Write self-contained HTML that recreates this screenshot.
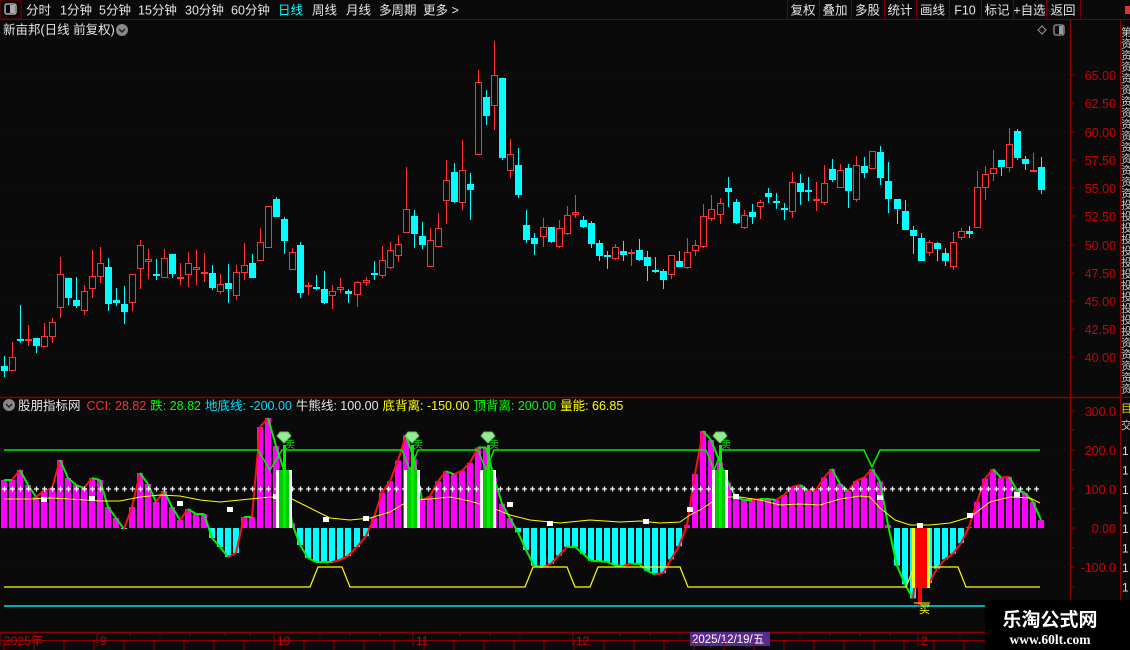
<!DOCTYPE html>
<html><head><meta charset="utf-8">
<style>
html,body{margin:0;padding:0;background:#0a0a0a;width:1130px;height:650px;overflow:hidden}
body{position:relative;font-family:"Liberation Sans","Noto Sans CJK SC",sans-serif;color:#ddd}
svg{position:absolute;left:0;top:0}
</style></head><body>
<svg id="s" width="1130" height="650" xmlns="http://www.w3.org/2000/svg" font-family="Liberation Sans, Noto Sans CJK SC, sans-serif"></svg>
<script>
var o=[];
function P(s){o.push(s);}
P('<rect x="0" y="0" width="1130" height="20" fill="#0a0a0a"/>');
P('<line x1="0" y1="19.5" x2="1130" y2="19.5" stroke="#7a0000"/>');
P('<rect x="0" y="0" width="21" height="19" fill="none" stroke="#7a0000"/>');
P('<rect x="5" y="4" width="11" height="10" rx="2" fill="none" stroke="#aaa" stroke-width="1.5"/><rect x="10" y="5" width="5" height="8" fill="#aaa"/>');
var tb=[["分时",26],["1分钟",60],["5分钟",99],["15分钟",138],["30分钟",185],["60分钟",231],["日线",278],["周线",312],["月线",346],["多周期",379],["更多 >",423]];
tb.forEach(function(t){P('<text x="'+t[1]+'" y="14.5" font-size="12.5" fill="'+(t[0]=="日线"?"#00ffff":"#e6e6e6")+'">'+t[0]+'</text>');});
var rb=[["复权",787],["叠加",819],["多股",851],["统计",884],["画线",916],["F10",949],["标记",981],["+自选",1013],["返回",1046]];
var sep=[787,819,851,884,916,949,981,1013,1046,1080];
sep.forEach(function(x){P('<line x1="'+(x+0.5)+'" y1="0" x2="'+(x+0.5)+'" y2="19" stroke="#7a0000"/>');});
rb.forEach(function(t,i){var w=sep[i+1]-sep[i];P('<text x="'+(t[1]+w/2)+'" y="14.5" font-size="12.5" fill="#e6e6e6" text-anchor="middle">'+t[0]+'</text>');});
P('<rect x="1120" y="0" width="10" height="19" fill="#0a0a0a"/><rect x="1125" y="6" width="5" height="8" fill="#e03030"/>');
P('<text x="3" y="34" font-size="12.5" fill="#e6e6e6">新亩邦(日线 前复权)</text>');
P('<circle cx="122" cy="30" r="6" fill="#888"/><path d="M119 29 L122 32 L125 29" stroke="#222" stroke-width="1.5" fill="none"/>');
P('<path d="M1042 26 L1046 30 L1042 34 L1038 30Z" fill="none" stroke="#999"/>');
P('<rect x="1054" y="25" width="10" height="10" rx="2" fill="none" stroke="#999" stroke-width="1.3"/><rect x="1059" y="26" width="4" height="8" fill="#999"/>');
P('<line x1="1070.5" y1="20" x2="1070.5" y2="632" stroke="#8b0000" stroke-width="1.5"/>');
P('<line x1="1120.5" y1="20" x2="1120.5" y2="650" stroke="#8b0000"/>');
P('<line x1="0" y1="397.5" x2="1130" y2="397.5" stroke="#8b0000" stroke-width="1.5"/>');
P('<line x1="0" y1="632.5" x2="1070" y2="632.5" stroke="#8b0000" stroke-width="1.5"/>');
P('<line x1="0" y1="640.5" x2="1130" y2="640.5" stroke="#8b0000"/>');
[[65,75],[62.5,103],[60,132],[57.5,160],[55,188],[52.5,216],[50,245],[47.5,273],[45,301],[42.5,329],[40,357]].forEach(function(p,i){
 if(i%2==0)P('<line x1="0" y1="'+p[1]+'" x2="1070" y2="'+p[1]+'" stroke="#5a0a0a" stroke-dasharray="1 7"/>');
 P('<line x1="1070" y1="'+p[1]+'" x2="1075" y2="'+p[1]+'" stroke="#8b0000"/>');
 P('<text x="1116" y="'+(p[1]+5)+'" font-size="12.5" fill="#d00000" text-anchor="end">'+p[0].toFixed(2)+'</text>');
});
var rs="第资资资资资资资资资资资资资资投投投投投投投投投投投投资资资资资资资资资资资资资资资";
for(var i=0;i<32;i++){P('<text x="1121" y="'+(36+i*11.5)+'" font-size="11" fill="#ccc">'+rs[i]+'</text>');}
P('<rect x="1121" y="398" width="9" height="22" fill="#0a0a0a"/><text x="1121" y="412" font-size="11" fill="#dd0">目</text><text x="1121" y="429" font-size="11" fill="#ccc">交</text>');
for(var i=0;i<10;i++)P('<text x="1122" y="'+(455+i*19.5)+'" font-size="12" fill="#ddd">1</text>');
var C=[[4,366,371,356,377,0],[12,357,371,342,371,1],[20,339,339,305,343,0],[28,339,339,325,346,1],[36,338,346,338,353,0],[44,336,347,323,347,1],[52,322,337,318,343,1],[60,274,308,257,318,1],[68,278,298,278,305,0],[76,300,306,277,308,0],[84,291,311,285,315,1],[92,276,289,250,298,1],[100,263,277,247,283,1],[108,267,304,258,311,0],[116,300,303,288,306,0],[124,304,312,286,324,0],[132,274,303,274,311,1],[140,245,269,240,289,1],[148,259,262,249,279,1],[156,274,274,259,280,0],[164,258,278,249,278,1],[172,254,274,254,278,0],[180,277,277,263,285,1],[188,263,275,252,287,1],[196,267,270,250,285,1],[204,272,272,253,282,1],[212,273,288,265,290,0],[220,284,292,274,294,1],[228,283,289,264,303,0],[236,272,296,265,300,1],[244,265,273,243,280,1],[252,263,278,254,278,0],[260,242,261,228,261,1],[268,206,248,206,248,1],[276,199,217,197,217,0],[284,219,241,217,254,0],[292,252,270,248,270,1],[300,245,293,242,298,0],[308,285,287,282,295,1],[316,287,289,275,290,0],[324,289,303,271,304,0],[332,291,296,285,309,1],[340,287,290,278,293,1],[348,291,294,289,303,0],[357,282,295,281,307,1],[366,280,283,277,286,1],[374,273,273,261,280,0],[382,260,276,246,278,1],[390,250,268,242,269,1],[398,244,256,235,262,1],[406,209,233,167,233,1],[414,216,234,210,248,0],[422,236,245,222,249,0],[430,240,267,228,267,1],[438,228,247,213,247,1],[446,180,201,160,224,1],[454,172,202,163,203,0],[462,170,203,140,210,1],[470,184,190,173,220,0],[478,82,155,70,155,1],[486,97,116,90,125,0],[494,75,106,41,130,1],[502,78,158,78,160,0],[510,154,171,139,178,1],[518,165,195,148,198,0],[526,225,240,210,243,0],[534,238,244,233,255,0],[543,227,237,218,247,1],[551,227,242,227,243,0],[559,228,247,220,248,1],[567,215,234,206,235,1],[575,212,215,195,218,1],[583,220,227,216,228,0],[591,223,244,221,248,0],[599,243,256,240,261,0],[607,255,255,251,269,0],[615,247,259,244,260,1],[623,251,255,241,261,0],[631,252,254,249,266,1],[639,250,260,239,261,0],[647,257,266,251,281,0],[655,270,270,257,273,0],[663,271,280,269,289,0],[671,255,275,255,279,1],[679,261,267,251,267,0],[687,252,268,238,269,1],[695,245,251,240,256,1],[703,216,247,204,248,1],[711,209,219,195,221,1],[720,203,215,198,224,1],[728,188,192,177,207,0],[736,202,223,199,224,0],[744,215,228,210,229,1],[752,212,217,204,224,0],[760,202,207,200,219,1],[768,193,197,188,203,0],[776,201,203,193,209,0],[784,208,210,203,220,0],[792,182,212,172,218,1],[800,183,192,174,205,0],[808,190,190,177,201,0],[816,199,199,182,211,1],[824,183,203,165,205,1],[832,169,180,159,182,0],[840,170,188,164,188,1],[848,168,191,164,208,0],[856,165,200,156,202,1],[864,166,173,157,178,0],[872,151,169,151,169,1],[880,152,178,146,185,0],[888,181,199,162,213,0],[897,199,209,199,224,0],[905,211,230,200,230,0],[913,230,236,226,254,0],[921,238,261,233,261,0],[929,242,253,240,256,1],[937,243,249,242,261,0],[945,253,261,248,266,0],[953,242,267,232,270,1],[961,231,238,228,240,1],[969,231,234,226,238,0],[977,187,228,171,228,1],[985,174,188,166,200,1],[993,168,174,150,181,1],[1001,160,167,160,176,0],[1009,144,168,128,172,1],[1017,131,158,129,160,0],[1025,159,164,156,170,0],[1033,170,170,153,170,1],[1041,167,190,157,194,0]];
C.forEach(function(c){
 var col=c[5]?"#ff3333":"#00ffff";var h=Math.max(c[2]-c[1],1);
 P('<line x1="'+(c[0]+0.5)+'" y1="'+c[3]+'" x2="'+(c[0]+0.5)+'" y2="'+c[4]+'" stroke="'+col+'"/>');
 if(c[5]) P('<rect x="'+(c[0]-2.5)+'" y="'+(c[1]+0.5)+'" width="6" height="'+(h>1?h-1:1)+'" fill="#0a0a0a" stroke="'+col+'"/>');
 else P('<rect x="'+(c[0]-3)+'" y="'+c[1]+'" width="7" height="'+(h<2?2:h)+'" fill="'+col+'"/>');
});
P('<circle cx="9" cy="405" r="6" fill="#888"/><path d="M6 404 L9 407 L12 404" stroke="#222" stroke-width="1.5" fill="none"/>');
P('<text y="410" font-size="12.5"><tspan x="18" fill="#e6e6e6">股朋指标网</tspan><tspan dx="6" fill="#ff3030">CCI: 28.82</tspan><tspan dx="4" fill="#00ff00">跌: 28.82</tspan><tspan dx="4" fill="#00e0ff">地底线: -200.00</tspan><tspan dx="4" fill="#e6e6e6">牛熊线: 100.00</tspan><tspan dx="4" fill="#ffff00">底背离: -150.00</tspan><tspan dx="4" fill="#00ff00">顶背离: 200.00</tspan><tspan dx="4" fill="#ffff00">量能: 66.85</tspan></text>');
[["300.0",411],["200.0",450],["100.0",489],["0.00",528],["-100.0",567]].forEach(function(p){
 P('<line x1="1070" y1="'+p[1]+'" x2="1075" y2="'+p[1]+'" stroke="#8b0000"/>');
 P('<text x="1116" y="'+(p[1]+5)+'" font-size="12.5" fill="#d00000" text-anchor="end">'+p[0]+'</text>');
});
[430,470,509,548,587,606].forEach(function(y){P('<line x1="1070" y1="'+y+'" x2="1074" y2="'+y+'" stroke="#8b0000"/>');});
[450,528,567].forEach(function(y){P('<line x1="0" y1="'+y+'" x2="1070" y2="'+y+'" stroke="#5a0a0a" stroke-dasharray="1 7"/>');});
var A=[[4,480],[12,480],[20,470],[28,485],[36,497],[44,491],[52,488],[60,460],[68,478],[76,485],[84,488],[92,478],[100,480],[108,507],[116,518],[124,529],[132,507],[140,473],[148,484],[156,502],[164,491],[172,507],[180,520],[188,509],[196,514],[204,514],[212,538],[220,547],[228,557],[236,553],[244,517],[252,517],[260,427],[268,418],[276,446],[284,470],[292,523],[300,545],[308,558],[316,562],[324,562],[332,562],[340,560],[348,556],[356,548],[364,540],[372,525],[380,495],[388,485],[396,470],[404,432],[412,445],[420,500],[428,500],[436,485],[444,470],[452,475],[460,472],[468,467],[476,450],[484,440],[492,470],[500,500],[508,515],[516,528],[524,545],[532,565],[540,568],[548,566],[556,560],[564,548],[572,545],[580,550],[588,560],[596,562],[604,560],[612,565],[620,566],[628,566],[636,560],[644,570],[652,572],[660,578],[668,565],[676,550],[684,540],[692,500],[700,431],[708,431],[716,455],[724,470],[732,495],[740,500],[748,500],[756,500],[764,498],[772,500],[780,500],[788,490],[796,484],[804,486],[812,495],[820,485],[828,470],[836,468],[844,500],[852,482],[860,480],[868,475],[876,463],[884,500],[892,550],[900,575],[908,590],[914,600],[920,520],[928,585],[936,570],[944,560],[952,555],[960,545],[968,530],[976,505],[984,480],[992,468],[1000,478],[1008,475],[1016,490],[1024,492],[1032,500],[1040,516]];
function iy(x){for(var i=0;i<A.length-1;i++){if(x>=A[i][0]&&x<=A[i+1][0]){var t=(x-A[i][0])/(A[i+1][0]-A[i][0]);return A[i][1]+t*(A[i+1][1]-A[i][1]);}}return 520;}
C.forEach(function(c){var y=iy(c[0]);
 if(y<528)P('<rect x="'+(c[0]-3)+'" y="'+y+'" width="6" height="'+(528-y)+'" fill="#ff00ff"/>');
 else P('<rect x="'+(c[0]-3)+'" y="528" width="6" height="'+(y-528)+'" fill="#00ffff"/>');
});
for(var i=0;i<C.length-1;i++){var y1=iy(C[i][0]),y2=iy(C[i+1][0]);P('<line x1="'+C[i][0]+'" y1="'+y1+'" x2="'+C[i+1][0]+'" y2="'+y2+'" stroke="'+(y2<y1?"#ff1010":"#00ee00")+'" stroke-width="2"/>');}
P('<polyline points="4,450 258,450 270,470 282,450 402,450 410,470 418,450 478,450 486,470 494,450 706,450 714,470 722,450 864,450 872,467 880,450 1040,450" fill="none" stroke="#00ee00" stroke-width="1.5"/>');
P('<polyline points="4,587 310,587 318,567 342,567 350,587 525,587 533,567 567,567 575,587 590,587 598,567 680,567 688,587 906,587 914,567 958,567 966,587 1040,587" fill="none" stroke="#ffff00" stroke-width="1.2"/>');
P('<line x1="4" y1="606" x2="1070" y2="606" stroke="#00e0e0" stroke-width="1.5"/>');
var d='';for(var x=4;x<=1042;x+=8)d+='<path d="M'+(x-2)+' 489h5M'+(x+0.5)+' 486.5v5" stroke="#fff" stroke-width="1.3"/>';P(d);
P('<polyline points="4,499 30,499 50,498 70,499 100,501 120,501 140,497 160,495 180,496 200,500 220,502 250,499 270,497 290,498 310,508 330,518 350,520 370,518 390,512 410,500 430,499 450,497 470,501 490,507 510,515 530,520 560,523 590,520 620,522 640,521 660,523 680,522 690,515 700,510 720,497 740,497 760,500 780,505 800,504 820,505 840,499 860,496 870,497 880,508 895,520 910,525 930,525 950,523 970,517 990,502 1010,497 1030,498 1040,503" fill="none" stroke="#ffff00" stroke-width="1"/>');
[[44,500],[92,499],[180,504],[230,510],[276,497],[326,520],[366,519],[412,500],[510,505],[550,524],[646,522],[690,510],[736,497],[880,498],[920,526],[970,516],[1017,495]].forEach(function(p){P('<rect x="'+(p[0]-3)+'" y="'+(p[1]-3)+'" width="6" height="5" fill="#fff"/>');});
[284,412,488,720].forEach(function(x){
 P('<rect x="'+(x-8)+'" y="470" width="16" height="58" fill="#fff"/><rect x="'+(x-5)+'" y="470" width="10" height="58" fill="#00cc00"/><rect x="'+(x-1)+'" y="445" width="3" height="83" fill="#00ee00"/>');
 P('<path d="M'+(x-7)+' 436 L'+(x-4)+' 432 L'+(x+4)+' 432 L'+(x+7)+' 436 L'+x+' 443Z" fill="#90ee90" stroke="#60c060"/>');
 P('<text x="'+(x+1)+'" y="448" font-size="10" fill="#00ee00">卖</text>');
});
P('<rect x="912" y="528" width="18" height="60" fill="#ffff00"/><rect x="915" y="528" width="12" height="60" fill="#ff0000"/><rect x="918" y="528" width="4" height="78" fill="#ff0000"/>');
P('<text x="919" y="613" font-size="11" fill="#ffff00">买</text><line x1="914" y1="603" x2="930" y2="603" stroke="#ff0"/>');
[[4,"2025年"],[100,"9"],[277,"10"],[416,"11"],[576,"12"],[921,"2"]].forEach(function(t){
 P('<line x1="'+(t[0]-3)+'" y1="632" x2="'+(t[0]-3)+'" y2="646" stroke="#8b0000"/>');
 P('<text x="'+t[0]+'" y="645" font-size="12" fill="#d00000">'+t[1]+'</text>');});
[130,160,190,225,250,320,350,380,460,490,520,620,650,680,800,830,860,890,960,990,1020].forEach(function(x){P('<line x1="'+x+'" y1="632" x2="'+x+'" y2="636" stroke="#8b0000"/>');});
P('<rect x="690" y="632" width="80" height="14" fill="#5a2a8a"/><text x="692" y="643" font-size="11.5" fill="#fff">2025/12/19/五</text>');
for(var x=4;x<1120;x+=30)P('<line x1="'+x+'" y1="641" x2="'+x+'" y2="650" stroke="#8b0000"/>');
P('<rect x="985" y="600" width="145" height="50" fill="#000"/>');
P('<text x="1050" y="626" font-size="19" font-weight="bold" fill="#fff" text-anchor="middle" font-family="Noto Sans CJK SC, sans-serif">乐淘公式网</text>');
P('<text x="1050" y="644" font-size="13.5" font-weight="bold" fill="#fff" text-anchor="middle" font-family="Liberation Serif, serif">www.60lt.com</text>');
document.getElementById('s').innerHTML=o.join('');
</script>
</body></html>
